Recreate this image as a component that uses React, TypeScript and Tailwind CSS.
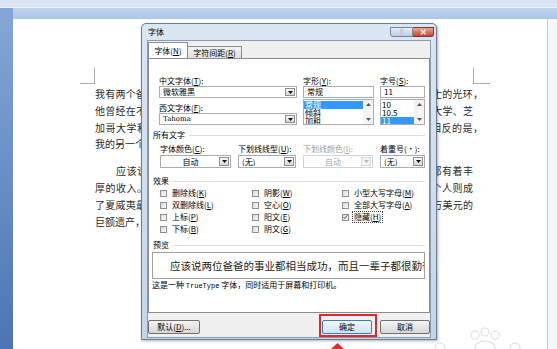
import React from "react";

const cjk = "font-['Noto_Sans_CJK_SC',sans-serif]";

const para1 = [
  { t: "我有两个爸爸，一个富，一个穷。一个爸爸受过良好的教育，聪明，拥有博士的光环，", w: "w-[388px] [text-align-last:justify]" },
  { t: "他曾经在不到两年的时间里修完了四年制的大学本科学业，随后又在斯坦福大学、芝", w: "w-[378px] [text-align-last:justify]" },
  { t: "加哥大学和西北大学进一步深造，并且在学校都拿到了全额奖学金。与之相反的是，", w: "w-[388px] [text-align-last:justify]" },
  { t: "我的另一个爸爸连八年级都没念完。", w: "w-[378px]" },
];

const para2 = [
  { t: "　　应该说两位爸爸的事业都相当成功，而且一辈子都很勤奋。他们两人都有着丰", w: "w-[378px] [text-align-last:justify]" },
  { t: "厚的收入。然而，其中一个人终其一生都在财务问题的泥沼中挣扎，另一个人则成", w: "w-[378px] [text-align-last:justify]" },
  { t: "了夏威夷最富有的人之一。一个爸爸死后为家庭、慈善机构和教堂留下数千万美元的", w: "w-[378px] [text-align-last:justify]" },
  { t: "巨额遗产，而另一个爸爸只留下了一些待付的账单。", w: "w-[378px]" },
];

function Arrow({ off }: { off?: boolean }) {
  return (
    <span
      className={
        "flex h-full w-[10px] shrink-0 items-center justify-center border " +
        (off ? "border-[#dadada] bg-[#f3f3f3]" : "border-[#8e8e8e] bg-linear-to-b from-[#fafafa] to-[#d6d6d6]")
      }
    >
      <svg width="5" height="3" viewBox="0 0 5 3">
        <path d="M0 0H5L2.5 3Z" fill={off ? "#b8b8b8" : "#111"} />
      </svg>
    </span>
  );
}

function Combo({ text, center, off, h }: { text: string; center?: boolean; off?: boolean; h: string }) {
  return (
    <div
      className={`flex items-center border bg-white p-px ${h} ${
        off ? "border-[#d4d4d4] text-[#a9a9a9]" : "border-[#a9acb3] text-black"
      }`}
    >
      <span className={`flex-1 truncate text-[8px] leading-none ${center ? "text-center" : "pl-[2px]"}`}>{text}</span>
      <Arrow off={off} />
    </div>
  );
}

function Field({ text }: { text: string }) {
  return (
    <div className="flex h-[12px] items-center border border-[#a9acb3] bg-white pl-[3px]">
      <span className="text-[8px] leading-none">{text}</span>
    </div>
  );
}

function ListBox({ items, sel }: { items: string[]; sel: number }) {
  return (
    <div className="mt-px flex h-[26px] border border-[#a9acb3] bg-white">
      <div className="flex-1 overflow-hidden pt-px text-[8px] leading-[8px]">
        {items.map((t, i) => (
          <div key={t} className={`pl-px ${i === sel ? "bg-[#3399ff] text-white" : ""}`}>
            {t}
          </div>
        ))}
      </div>
      <div className="flex w-[10px] flex-col items-center justify-between bg-[#f4f4f4] py-[3px]">
        <svg width="5" height="3" viewBox="0 0 5 3">
          <path d="M0 3H5L2.5 0Z" fill="#555" />
        </svg>
        <svg width="5" height="3" viewBox="0 0 5 3">
          <path d="M0 0H5L2.5 3Z" fill="#555" />
        </svg>
      </div>
    </div>
  );
}

function Label({ children, off }: { children: React.ReactNode; off?: boolean }) {
  return (
    <div className={`h-[11px] whitespace-nowrap text-[8px] leading-[11px] ${off ? "text-[#a0a0a0]" : "text-black"}`}>
      {children}
    </div>
  );
}

function Section({ title }: { title: string }) {
  return (
    <div className="flex h-[10px] items-center gap-[4px] text-[8px] leading-none">
      <span>{title}</span>
      <span className="h-px flex-1 bg-[#d5dfe5]" />
    </div>
  );
}

function Check({ label, on }: { label: React.ReactNode; on?: boolean }) {
  return (
    <div className="flex h-[12px] items-center gap-[5px]">
      <span className="flex h-[7px] w-[7px] items-center justify-center border border-[#8f8f8f] bg-linear-to-br from-[#d9d9d9] to-[#fbfbfb]">
        {on && (
          <svg width="6" height="6" viewBox="0 0 6 6">
            <path d="M0.8 3.2L2.3 4.8L5.2 0.9" stroke="#2c4f86" strokeWidth="1.1" fill="none" />
          </svg>
        )}
      </span>
      <span className={`text-[8px] leading-none ${on ? "outline-1 outline-offset-1 outline-dotted outline-[#444]" : ""}`}>
        {label}
      </span>
    </div>
  );
}

function Btn({ children, def, w }: { children: React.ReactNode; def?: boolean; w: string }) {
  return (
    <div
      className={`flex h-[14px] items-center justify-center rounded-[2px] border text-[8px] leading-none ${w} ${
        def
          ? "border-[#3c7fb1] bg-linear-to-b from-[#f0f7fd] to-[#cfe4f5]"
          : "border-[#707070] bg-linear-to-b from-[#f4f4f4] to-[#d6d6d6]"
      }`}
    >
      {children}
    </div>
  );
}

export default function App() {
  return (
    <div className={`relative flex h-[349px] w-[557px] flex-col overflow-hidden bg-[#eef2f8] ${cjk}`}>
      <div className="h-[8px] border-b border-[#f4f8fc] bg-[#dae6f4]" />
      <div className="flex flex-1">
        <div className="w-[13px] bg-linear-to-b from-[#86a6d6] to-[#4d74b4]" />
        <div className="flex flex-1 flex-col">
          <div className="h-[11px] bg-linear-to-b from-[#bed2ec] to-[#adc5e7]" />
          <div className="flex flex-1">
            <div className="flex flex-1 flex-col border-r border-[#c5cad2] bg-white pl-[82px] pt-[49px] text-[10px] text-[#2a2a2a]">
              <div className="flex w-[378px] justify-between">
                <span className="-ml-[15px] h-[16px] w-[15px] border-b border-r border-[#a9a9a9]" />
                <span className="-mr-[17px] h-[16px] w-[17px] border-b border-l border-[#a9a9a9]" />
              </div>
              <div className="mt-[2px] leading-[16.8px]">
                {para1.map((l) => (
                  <div key={l.t} className={`whitespace-nowrap ${l.w}`}>
                    {l.t}
                  </div>
                ))}
                <div className="mt-[10px]">
                  {para2.map((l) => (
                    <div key={l.t} className={`whitespace-nowrap ${l.w}`}>
                      {l.t}
                    </div>
                  ))}
                </div>
              </div>
            </div>
            <div className="w-[9px] bg-[#f6f7f9]" />
          </div>
        </div>
      </div>

      {/* watermark */}
      <svg className="absolute left-[420px] top-[326px]" width="110" height="24" viewBox="0 0 110 24">
        <g fill="none" stroke="#e6e6e6" strokeWidth="1.5">
          <circle cx="55" cy="9" r="4" />
          <circle cx="65" cy="6" r="4" />
          <circle cx="75" cy="9" r="4" />
          <ellipse cx="65" cy="22" rx="10" ry="7" />
          <circle cx="20" cy="22" r="5" />
          <circle cx="95" cy="22" r="5" />
        </g>
      </svg>

      {/* dialog */}
      <div className="absolute left-[141px] top-[23px] flex h-[317px] w-[296px] flex-col rounded-t-[5px] border border-[#6b7d93] bg-linear-to-b from-[#dbe6f3] to-[#c4d5ea] px-[5px] pb-px shadow-[1px_1px_3px_rgba(0,0,0,0.3)]">
        <div className="flex h-[16px] items-start justify-between">
          <span className="pl-px pt-[4px] text-[8px] leading-none">字体</span>
          <div className="-mr-[3px] flex pt-[3px]">
            <span className="flex h-[10px] w-[23px] items-center justify-center rounded-bl-[3px] border border-[#76879c] bg-linear-to-b from-[#e7eef7] to-[#bccde2] text-[7px] font-bold leading-none text-[#eef3fa] [text-shadow:0_0_1px_#445]">
              ?
            </span>
            <span className="flex h-[10px] w-[21px] items-center justify-center rounded-br-[3px] border border-l-0 border-[#7a3a2e] bg-linear-to-b from-[#e9a894] to-[#c6432f] text-[8px] font-bold leading-none text-white">
              ✕
            </span>
          </div>
        </div>

        <div className="flex flex-1 flex-col border border-[#8a9bb0] bg-[#f0f0f0] pt-[2px]">
          {/* tabs */}
          <div className="flex h-[15px] items-end">
            <div className="relative z-10 flex h-[16px] w-[40px] items-center justify-center border border-b-0 border-[#898c95] bg-white text-[8px] leading-none">
              字体(<u>N</u>)
            </div>
            <div className="-ml-px flex h-[12px] w-[55px] items-center justify-center border border-b-0 border-[#898c95] bg-linear-to-b from-[#f3f3f3] to-[#e0e0e0] text-[8px] leading-none">
              字符间距(<u>R</u>)
            </div>
          </div>

          {/* panel */}
          <div className="flex h-[255px] w-[282px] flex-col border border-[#898c95] bg-white px-[4px] pt-[16px]">
            <div className="ml-[6px] flex gap-[6px]">
              <div className="w-[138px]">
                <Label>
                  中文字体(<u>T</u>):
                </Label>
                <Combo text="微软雅黑" h="h-[12px]" />
                <div className="mt-[4px]">
                  <Label>
                    西文字体(<u>F</u>):
                  </Label>
                </div>
                <div className="flex h-[12px] items-center border border-[#a9acb3] bg-white p-px">
                  <span className="flex-1 pl-[2px] font-['DejaVu_Serif',serif] text-[7px] leading-none">Tahoma</span>
                  <Arrow />
                </div>
              </div>
              <div className="w-[71px]">
                <Label>
                  字形(<u>Y</u>):
                </Label>
                <Field text="常规" />
                <ListBox items={["常规", "倾斜", "加粗"]} sel={0} />
              </div>
              <div className="w-[45px]">
                <Label>
                  字号(<u>S</u>):
                </Label>
                <Field text="11" />
                <ListBox items={["10", "10.5", "11"]} sel={2} />
              </div>
            </div>

            <div className="mt-[5px]">
              <Section title="所有文字" />
            </div>
            <div className="ml-[7px] mt-[3px] flex gap-[7px]">
              <div className="w-[71px]">
                <Label>
                  字体颜色(<u>C</u>):
                </Label>
                <div className="mt-px">
                  <Combo text="自动" center h="h-[13px]" />
                </div>
              </div>
              <div className="w-[58px]">
                <Label>
                  下划线线型(<u>U</u>):
                </Label>
                <div className="mt-px">
                  <Combo text="(无)" h="h-[13px]" />
                </div>
              </div>
              <div className="w-[70px]">
                <Label off>
                  下划线颜色(<u>I</u>):
                </Label>
                <div className="mt-px">
                  <Combo text="自动" center off h="h-[13px]" />
                </div>
              </div>
              <div className="w-[45px]">
                <Label>
                  着重号(·):
                </Label>
                <div className="mt-px">
                  <Combo text="(无)" h="h-[13px]" />
                </div>
              </div>
            </div>

            <div className="mt-[8px]">
              <Section title="效果" />
            </div>
            <div className="ml-[7px] mt-px grid grid-cols-[92px_90px_1fr]">
              <div>
                <Check label={<>删除线(<u>K</u>)</>} />
                <Check label={<>双删除线(<u>L</u>)</>} />
                <Check label={<>上标(<u>P</u>)</>} />
                <Check label={<>下标(<u>B</u>)</>} />
              </div>
              <div>
                <Check label={<>阴影(<u>W</u>)</>} />
                <Check label={<>空心(<u>O</u>)</>} />
                <Check label={<>阳文(<u>E</u>)</>} />
                <Check label={<>阴文(<u>G</u>)</>} />
              </div>
              <div>
                <Check label={<>小型大写字母(<u>M</u>)</>} />
                <Check label={<>全部大写字母(<u>A</u>)</>} />
                <Check label={<>隐藏(<u>H</u>)</>} on />
              </div>
            </div>

            <div className="mt-[5px]">
              <Section title="预览" />
            </div>
            <div className="-ml-px mt-[2px] flex h-[27px] w-[273px] items-center overflow-hidden whitespace-nowrap border border-[#a0a0a0] bg-white pl-[17px] text-[10.5px] text-[#222]">
              应该说两位爸爸的事业都相当成功，而且一辈子都很勤奋
            </div>
            <div className="-ml-px mt-[1px] whitespace-nowrap text-[8px] leading-[10px]">
              这是一种 <span className="font-['Liberation_Mono',monospace] text-[7px]">TrueType</span> 字体，同时适用于屏幕和打印机。
            </div>
          </div>

          {/* buttons */}
          <div className="mt-[7px] flex items-center">
            <Btn w="w-[52px]">
              默认(<u>D</u>)...
            </Btn>
            <div className="ml-auto flex gap-[8px]">
              <Btn w="w-[50px]" def>
                确定
              </Btn>
              <Btn w="w-[50px]">取消</Btn>
            </div>
          </div>
        </div>
      </div>

      {/* annotation */}
      <div className="absolute left-[319px] top-[314px] h-[23px] w-[58px] border-2 border-[#e3262b]" />
      <svg className="absolute left-[331px] top-[343px]" width="13" height="6" viewBox="0 0 13 6">
        <path d="M6.5 0L13 6H0Z" fill="#e3262b" />
      </svg>
    </div>
  );
}
